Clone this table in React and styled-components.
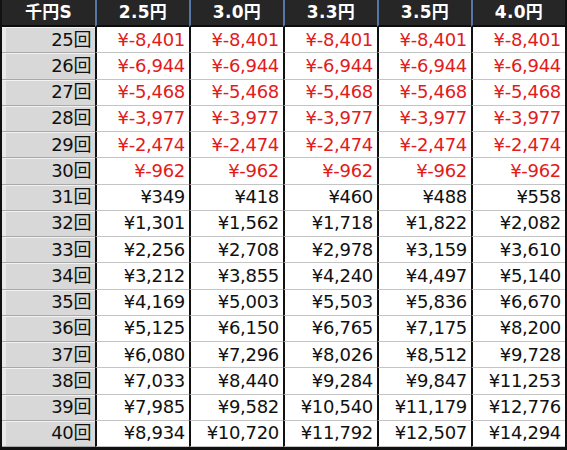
import React from "react";
import styled, { createGlobalStyle } from "styled-components";

const GlobalStyle = createGlobalStyle`
    html, body {
        margin: 0;
        padding: 0;
        background: #ffffff;
    }
`;

const RATES = ["2.5円", "3.0円", "3.3円", "3.5円", "4.0円"];

const ROWS = [
    [25, ["¥-8,401", "¥-8,401", "¥-8,401", "¥-8,401", "¥-8,401"]],
    [26, ["¥-6,944", "¥-6,944", "¥-6,944", "¥-6,944", "¥-6,944"]],
    [27, ["¥-5,468", "¥-5,468", "¥-5,468", "¥-5,468", "¥-5,468"]],
    [28, ["¥-3,977", "¥-3,977", "¥-3,977", "¥-3,977", "¥-3,977"]],
    [29, ["¥-2,474", "¥-2,474", "¥-2,474", "¥-2,474", "¥-2,474"]],
    [30, ["¥-962", "¥-962", "¥-962", "¥-962", "¥-962"]],
    [31, ["¥349", "¥418", "¥460", "¥488", "¥558"]],
    [32, ["¥1,301", "¥1,562", "¥1,718", "¥1,822", "¥2,082"]],
    [33, ["¥2,256", "¥2,708", "¥2,978", "¥3,159", "¥3,610"]],
    [34, ["¥3,212", "¥3,855", "¥4,240", "¥4,497", "¥5,140"]],
    [35, ["¥4,169", "¥5,003", "¥5,503", "¥5,836", "¥6,670"]],
    [36, ["¥5,125", "¥6,150", "¥6,765", "¥7,175", "¥8,200"]],
    [37, ["¥6,080", "¥7,296", "¥8,026", "¥8,512", "¥9,728"]],
    [38, ["¥7,033", "¥8,440", "¥9,284", "¥9,847", "¥11,253"]],
    [39, ["¥7,985", "¥9,582", "¥10,540", "¥11,179", "¥12,776"]],
    [40, ["¥8,934", "¥10,720", "¥11,792", "¥12,507", "¥14,294"]],
];

const Table = styled.div`
    box-sizing: border-box;
    width: 567px;
    height: 450px;
    display: grid;
    grid-template-columns: 93px repeat(5, 94px);
    grid-template-rows: 27px repeat(16, minmax(0, 1fr));
    border: 2px solid #111111;
    border-top: none;
    border-bottom-width: 3px;
    background: #ffffff;
    overflow: hidden;
`;

const HeadCell = styled.div`
    box-sizing: border-box;
    display: flex;
    align-items: center;
    justify-content: center;
    background: #262626;
    color: #ffffff;
    font-family: "DejaVu Sans", "Noto Sans CJK JP", sans-serif;
    font-weight: bold;
    font-size: 17px;
    line-height: 1;
    letter-spacing: 0.3px;
    border-bottom: 2px solid #0d0d0d;
    border-left: ${(p) => (p.$first ? "none" : "2px solid #5676a8")};
`;

const LabelCell = styled.div`
    box-sizing: border-box;
    display: flex;
    align-items: center;
    justify-content: flex-end;
    padding-right: 4px;
    background: linear-gradient(to right, #e9e9e9 0, #e9e9e9 4px, #d8d8d8 4px);
    color: #111111;
    font-family: "DejaVu Sans", "Noto Sans CJK JP", sans-serif;
    font-size: 18px;
    line-height: 1;
    letter-spacing: -0.4px;
    border-bottom: 1px solid #a9a9a9;
    box-shadow: inset 0 1px 0 #f2f2f2;
`;

const ValueCell = styled.div`
    box-sizing: border-box;
    display: flex;
    align-items: center;
    justify-content: flex-end;
    padding-right: 4px;
    color: ${(p) => (p.$negative ? "#e31b1b" : "#111111")};
    font-family: "DejaVu Sans", "Noto Sans CJK JP", sans-serif;
    font-size: 18px;
    line-height: 1;
    letter-spacing: -0.3px;
    border-left: 2px solid #111111;
    border-bottom: 1px solid #c4c4c4;
`;

const App = () => {
    return (
        <>
            <GlobalStyle />
            <Table>
                <HeadCell $first>千円S</HeadCell>
                {RATES.map((rate) => (
                    <HeadCell key={rate}>{rate}</HeadCell>
                ))}
                {ROWS.map(([count, values]) => (
                    <React.Fragment key={count}>
                        <LabelCell>{count}回</LabelCell>
                        {values.map((v, i) => (
                            <ValueCell key={i} $negative={v.includes("-")}>
                                {v}
                            </ValueCell>
                        ))}
                    </React.Fragment>
                ))}
            </Table>
        </>
    );
};

export default App;
